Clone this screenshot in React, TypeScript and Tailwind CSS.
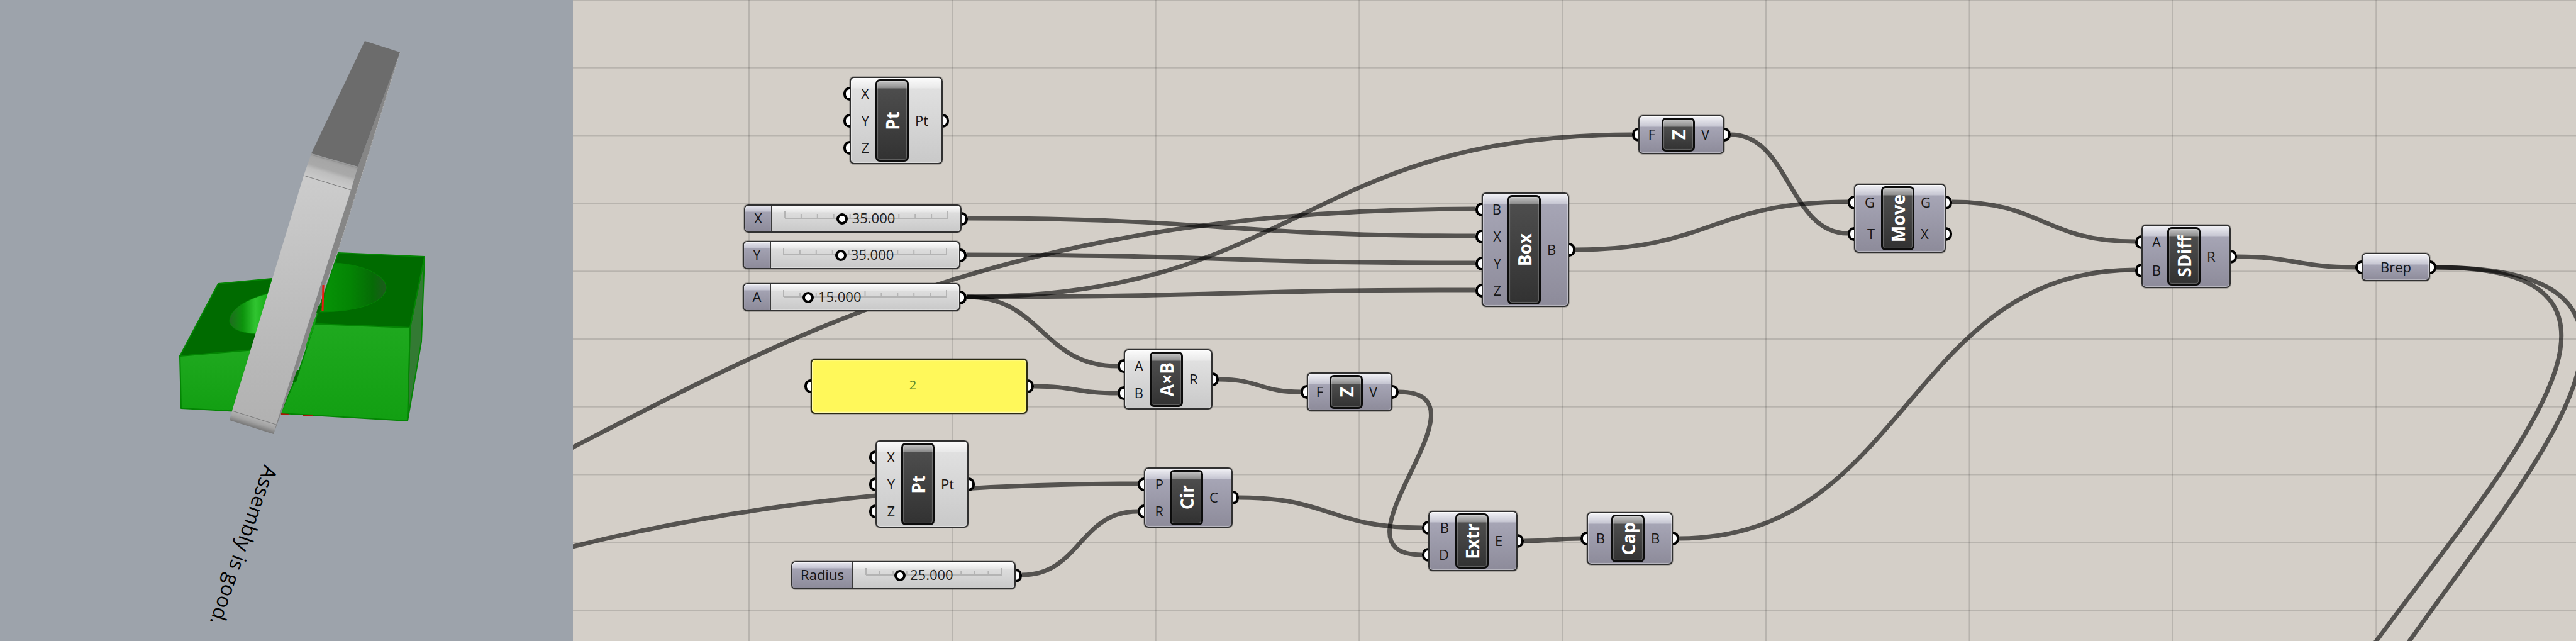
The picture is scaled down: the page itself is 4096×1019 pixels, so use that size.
import { useState } from "react";

type Tone = "grey" | "violet";

const toneFill: Record<Tone, string> = {
  grey: "bg-[linear-gradient(to_bottom,#fbfbfb_0,#e9e9e9_16px,#e0e0e0_17px,#c9c9c9_100%)]",
  violet: "bg-[linear-gradient(to_bottom,#f2f2f6_0,#c6c6d2_16px,#a6a5b5_17px,#8d8b9a_100%)]",
};

const frame =
  "rounded-[7px] border-2 border-[#303030] shadow-[inset_0_1px_1px_#ffffffcc,inset_0_0_1px_1px_#ffffff66,0_0_0_1px_#00000033]";

function Port({ side }: { side: "in" | "out" }) {
  return side === "in" ? (
    <span className="absolute top-1/2 -left-[12px] h-[22px] w-[10px] -translate-y-1/2 rounded-l-full border-4 border-r-0 border-black bg-white" />
  ) : (
    <span className="absolute top-1/2 -right-[12px] h-[22px] w-[10px] -translate-y-1/2 rounded-r-full border-4 border-l-0 border-black bg-white" />
  );
}

type ComponentNode = {
  id: string;
  title: string;
  inputs: string[];
  outputs: string[];
  tone: Tone;
  place: string;
  inputWidth: string;
};

const nodes: ComponentNode[] = [
  { id: "pt-top", title: "Pt", inputs: ["X", "Y", "Z"], outputs: ["Pt"], tone: "grey", place: "left-[440px] top-[122px] h-[139px] w-[148px]", inputWidth: "w-[39px]" },
  { id: "pt-low", title: "Pt", inputs: ["X", "Y", "Z"], outputs: ["Pt"], tone: "grey", place: "left-[481px] top-[700px] h-[139px] w-[148px]", inputWidth: "w-[39px]" },
  { id: "mul", title: "A×B", inputs: ["A", "B"], outputs: ["R"], tone: "grey", place: "left-[876px] top-[555px] h-[96px] w-[141px]", inputWidth: "w-[39px]" },
  { id: "z-low", title: "Z", inputs: ["F"], outputs: ["V"], tone: "violet", place: "left-[1167px] top-[592px] h-[62px] w-[136px]", inputWidth: "w-[34px]" },
  { id: "cir", title: "Cir", inputs: ["P", "R"], outputs: ["C"], tone: "violet", place: "left-[908px] top-[743px] h-[96px] w-[141px]", inputWidth: "w-[39px]" },
  { id: "box", title: "Box", inputs: ["B", "X", "Y", "Z"], outputs: ["B"], tone: "violet", place: "left-[1445px] top-[306px] h-[182px] w-[139px]", inputWidth: "w-[39px]" },
  { id: "extr", title: "Extr", inputs: ["B", "D"], outputs: ["E"], tone: "violet", place: "left-[1360px] top-[812px] h-[96px] w-[142px]", inputWidth: "w-[41px]" },
  { id: "cap", title: "Cap", inputs: ["B"], outputs: ["B"], tone: "violet", place: "left-[1612px] top-[814px] h-[84px] w-[137px]", inputWidth: "w-[37px]" },
  { id: "z-top", title: "Z", inputs: ["F"], outputs: ["V"], tone: "violet", place: "left-[1694px] top-[183px] h-[62px] w-[137px]", inputWidth: "w-[35px]" },
  { id: "move", title: "Move", inputs: ["G", "T"], outputs: ["G", "X"], tone: "violet", place: "left-[2037px] top-[292px] h-[110px] w-[146px]", inputWidth: "w-[41px]" },
  { id: "sdiff", title: "SDiff", inputs: ["A", "B"], outputs: ["R"], tone: "violet", place: "left-[2494px] top-[357px] h-[101px] w-[142px]", inputWidth: "w-[39px]" },
];

function NodeBox({ node }: { node: ComponentNode }) {
  return (
    <section aria-label={node.title} className={`absolute flex ${frame} ${toneFill[node.tone]} ${node.place}`}>
      <div className={`flex flex-col py-[3px] ${node.inputWidth}`}>
        {node.inputs.map((name) => (
          <div key={name} className="relative flex flex-1 items-center justify-end pr-[10px] pb-[2px] text-[22px] leading-none">
            <Port side="in" />
            {name}
          </div>
        ))}
      </div>
      <div className="my-[2px] flex w-[53px] items-center justify-center rounded-[7px] border-[3px] border-[#0c0c0c] bg-[linear-gradient(to_bottom,#c4c4c4_0,#8c8c8c_11px,#4d4d4d_12px,#323232_100%)] shadow-[inset_0_0_1px_1px_#ffffff40]">
        <h2 className="rotate-180 text-[28px] leading-none font-bold whitespace-nowrap text-white [text-orientation:sideways] [writing-mode:vertical-rl]">
          {node.title}
        </h2>
      </div>
      <div className="flex flex-1 flex-col py-[3px]">
        {node.outputs.map((name) => (
          <div key={name} className="relative flex flex-1 items-center pb-[2px] pl-[10px] text-[22px] leading-none">
            <Port side="out" />
            {name}
          </div>
        ))}
      </div>
    </section>
  );
}

type SliderProps = { id: string; label: string; initial: number; place: string; labelWidth: string };

const sliders: SliderProps[] = [
  { id: "slider-x", label: "X", initial: 35, place: "left-[272px] top-[325px] w-[346px]", labelWidth: "w-[43px]" },
  { id: "slider-y", label: "Y", initial: 35, place: "left-[270px] top-[383px] w-[346px]", labelWidth: "w-[43px]" },
  { id: "slider-a", label: "A", initial: 15, place: "left-[270px] top-[450px] w-[346px]", labelWidth: "w-[43px]" },
  { id: "slider-r", label: "Radius", initial: 25, place: "left-[347px] top-[892px] w-[357px]", labelWidth: "w-[97px]" },
];

const ticks = [0, 10, 20, 30, 40, 50, 60, 70, 80, 90, 100];

function NumberSlider({ id, label, initial, place, labelWidth }: SliderProps) {
  const [value, setValue] = useState(initial);
  return (
    <div className={`absolute flex h-[45px] bg-[linear-gradient(to_bottom,#fdfdfd_0,#e6e6e6_10px,#dddddd_11px,#c9c9c9_100%)] ${frame} ${place}`}>
      <label
        htmlFor={id}
        className={`flex items-center justify-center rounded-l-[5px] border-r-2 border-[#3a3a3a] bg-[linear-gradient(to_bottom,#e6e6ee_0,#c3c3d0_9px,#a3a2b2_10px,#8d8b9a_100%)] pb-[3px] text-[22px] leading-none shadow-[inset_0_1px_1px_#ffffffaa] ${labelWidth}`}
      >
        {label}
      </label>
      <div className="relative mx-5 flex-1">
        <svg aria-hidden="true" className="absolute inset-0 h-full w-full overflow-visible" stroke="#b4b4b4" strokeWidth="2">
          <line x1="0" x2="100%" y1="20" y2="20" />
          {ticks.map((t) => (
            <line key={t} x1={`${t}%`} x2={`${t}%`} y1="20" y2={t % 100 === 0 ? 9 : t === 50 ? 11 : 13} />
          ))}
        </svg>
        <input
          id={id}
          type="range"
          min={0}
          max={100}
          value={value}
          onChange={(e) => setValue(Number(e.target.value))}
          className="absolute inset-y-0 -left-[9px] m-0 h-full w-[calc(100%+18px)] cursor-pointer appearance-none bg-transparent [&::-webkit-slider-thumb]:size-[18px] [&::-webkit-slider-thumb]:appearance-none [&::-webkit-slider-thumb]:rounded-full [&::-webkit-slider-thumb]:border-4 [&::-webkit-slider-thumb]:border-black [&::-webkit-slider-thumb]:bg-white"
        />
        <output htmlFor={id} className="pointer-events-none absolute inset-y-0 ml-[16px] flex items-center pb-[3px] text-[22px] leading-none text-[#222]" style={{ left: `${value}%` }}>
          {value.toFixed(3)}
        </output>
      </div>
      <Port side="out" />
    </div>
  );
}

type Wire = { from: [number, number]; to: [number, number]; pull?: number };

const wires: Wire[] = [
  { from: [628, 347], to: [1434, 375] },
  { from: [626, 405], to: [1434, 418] },
  { from: [626, 472], to: [1434, 461] },
  { from: [626, 472], to: [1684, 214] },
  { from: [626, 472], to: [866, 582] },
  { from: [-1366, 1055], to: [1434, 332] },
  { from: [-2702, 1716], to: [898, 769] },
  { from: [733, 614], to: [866, 625] },
  { from: [1027, 603], to: [1157, 623] },
  { from: [1313, 623], to: [1350, 882], pull: 162 },
  { from: [1059, 791], to: [1350, 839] },
  { from: [714, 914], to: [898, 813] },
  { from: [1512, 860], to: [1602, 856] },
  { from: [1759, 856], to: [2484, 429] },
  { from: [1594, 397], to: [2027, 321] },
  { from: [1841, 214], to: [2027, 371] },
  { from: [2193, 321], to: [2484, 384] },
  { from: [2646, 408], to: [2834, 425] },
  { from: [2963, 425], to: [2913, 1425], pull: 708 },
  { from: [2963, 425], to: [3013, 1425], pull: 780 },
];

function wirePath({ from, to, pull }: Wire) {
  const h = pull ?? (to[0] - from[0]) / 2;
  return `M${from[0]} ${from[1]} C${from[0] + h} ${from[1]} ${to[0] - h} ${to[1]} ${to[0]} ${to[1]}`;
}

function WireLayer() {
  return (
    <svg aria-hidden="true" className="absolute inset-0 h-full w-full" fill="none">
      <g stroke="#000" strokeOpacity="0.13" strokeWidth="2">
        {Array.from({ length: 9 }, (_, i) => (
          <line key={`v${i}`} x1={280 + i * 323.4} x2={280 + i * 323.4} y1="0" y2="100%" />
        ))}
        {Array.from({ length: 10 }, (_, i) => (
          <line key={`h${i}`} x1="0" x2="100%" y1={i * 107.8} y2={i * 107.8} />
        ))}
      </g>
      <g stroke="#000" strokeOpacity="0.6" strokeWidth="7">
        {wires.map((w, i) => (
          <path key={i} d={wirePath(w)} />
        ))}
      </g>
    </svg>
  );
}

function Viewport() {
  return (
    <svg viewBox="0 0 911 1019" className="h-full w-full" role="img" aria-label="Assembly preview">
      <defs>
        <linearGradient id="arm" x1="0" y1="0" x2="0" y2="1">
          <stop offset="0" stopColor="#cccccc" />
          <stop offset="1" stopColor="#b1b1b1" />
        </linearGradient>
        <linearGradient id="bend" gradientUnits="userSpaceOnUse" x1="532" y1="255" x2="521" y2="291">
          <stop offset="0" stopColor="#9a9a9a" />
          <stop offset="0.15" stopColor="#a6a6a6" />
          <stop offset="0.45" stopColor="#a9a9a9" />
          <stop offset="0.62" stopColor="#bebebe" />
          <stop offset="1" stopColor="#cacaca" />
        </linearGradient>
        <linearGradient id="foot" gradientUnits="userSpaceOnUse" x1="405" y1="663" x2="400" y2="679">
          <stop offset="0" stopColor="#b4b4b4" />
          <stop offset="0.5" stopColor="#a2a2a2" />
          <stop offset="1" stopColor="#777777" />
        </linearGradient>
        <linearGradient id="front" x1="0" y1="0" x2="0" y2="1">
          <stop offset="0" stopColor="#1fa91f" />
          <stop offset="1" stopColor="#129f12" />
        </linearGradient>
        <linearGradient id="holeRight" x1="0" y1="0" x2="1" y2="0">
          <stop offset="0" stopColor="#079507" />
          <stop offset="0.45" stopColor="#048504" />
          <stop offset="0.8" stopColor="#066b06" />
          <stop offset="1" stopColor="#1d5a1d" />
        </linearGradient>
        <linearGradient id="holeLeft" x1="0" y1="0" x2="1" y2="0">
          <stop offset="0" stopColor="#1f6b1f" />
          <stop offset="0.28" stopColor="#0c930c" />
          <stop offset="0.55" stopColor="#30c430" />
          <stop offset="0.85" stopColor="#12a812" />
        </linearGradient>
      </defs>

      <g stroke="#048504" strokeWidth="2" strokeLinejoin="round">
        <polygon points="347,451 432,443 405,557 286,566" fill="#006b00" />
        <polygon points="286,566 405,556 380,654 288,649" fill="url(#front)" />
        <path d="M440 464 C405 469 365 488 365 510 C365 522 383 530 410 531Z" fill="url(#holeLeft)" strokeWidth="1" />
        <polygon points="675,408 670,543 648,669 652,521" fill="#337a33" />
        <polygon points="538,402 675,408 652,521 499,515" fill="#006b00" />
        <polygon points="500,515 652,521 648,669 446,657 476,588" fill="url(#front)" />
        <path d="M532 418 C575 420 614 437 614 457 C614 482 565 496 508 496Z" fill="url(#holeRight)" strokeWidth="1" />
      </g>
      <polygon points="404,533 399,553 411,551 417,533" fill="#005c00" />
      <polygon points="505,496 501,515 488,551 482,551" fill="#12a012" />
      <polygon points="504,487 513,487 508,497 500,499" fill="#006b00" />
      <polygon points="471,588 477,588 471,607 464,607" fill="#006b00" />

      <polygon points="636,83 595,216 539,394 517,453 485,554 460,622 435,690 439,675 558,302 569,265" fill="#868686" />
      <path d="M636 83 L595 216 L539 394 L512 468" stroke="#b4b4b4" strokeWidth="1" strokeDasharray="3 2" fill="none" />
      <polygon points="580,65 636,83 569,265 495,244" fill="#6c6c6c" />
      <polygon points="495,244 569,265 558,302 483,279" fill="url(#bend)" />
      <polygon points="483,279 558,302 439,675 369,653" fill="url(#arm)" />
      <polygon points="369,653 439,675 435,690 365,668" fill="url(#foot)" />
      <g stroke="#7c7c7c" strokeWidth="1">
        <line x1="483" y1="279" x2="558" y2="302" />
        <line x1="369" y1="653" x2="439" y2="675" />
        <line x1="495" y1="246" x2="569" y2="267" stroke="#909090" />
      </g>
      <line x1="514" y1="453" x2="513" y2="495" stroke="#e51c10" strokeWidth="3" />
      <path d="M447 658 L459 659 M482 660 L498 661" stroke="#a81a08" strokeWidth="2" />

      <text transform="translate(420 738) rotate(109)" fontSize="32" fill="#000">
        Assembly is good.
      </text>
    </svg>
  );
}

export default function App() {
  return (
    <div className="flex min-h-screen w-full bg-[#d4cfc8] font-['Open_Sans','Noto_Sans',sans-serif] text-[#161616]">
      <aside className="min-w-0 flex-[911] bg-[#9da3ab]">
        <Viewport />
      </aside>
      <main className="relative min-w-0 flex-[3185] overflow-hidden">
        <WireLayer />
        {nodes.map((n) => (
          <NodeBox key={n.id} node={n} />
        ))}
        {sliders.map((s) => (
          <NumberSlider key={s.id} {...s} />
        ))}
        <div className="absolute top-[570px] left-[378px] flex h-[88px] w-[345px] items-center justify-center rounded-[7px] border-2 border-[#2b2b12] bg-[#fff85a] pr-5 pb-1 text-[20px] leading-none text-[#5d8526] shadow-[inset_0_0_2px_1px_#ffffffaa,0_0_0_1px_#00000033]">
          <Port side="in" />
          2
          <Port side="out" />
        </div>
        <div className={`absolute top-[402px] left-[2844px] flex h-[45px] w-[109px] items-center justify-center pb-[2px] text-[22px] leading-none ${frame} ${toneFill.violet}`}>
          <Port side="in" />
          Brep
          <Port side="out" />
        </div>
      </main>
    </div>
  );
}
